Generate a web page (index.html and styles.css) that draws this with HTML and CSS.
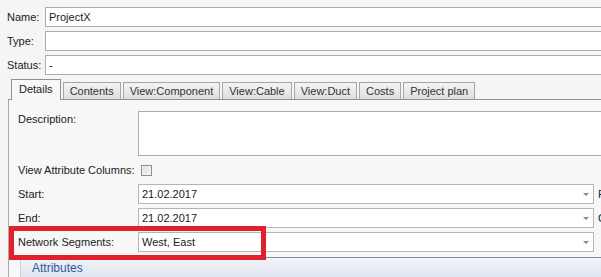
FILE: index.html
```html
<!DOCTYPE html>
<html lang="en">
  <head>
    <meta charset="UTF-8" />
    <title>ProjectX</title>
    <link rel="stylesheet" href="styles.css">
  </head>
  <body>
    <div class="head-fields">
      <div class="head-row">
        <span class="head-label">Name:</span>
        <div class="text-box">ProjectX</div>
      </div>
      <div class="head-row">
        <span class="head-label">Type:</span>
        <div class="text-box"></div>
      </div>
      <div class="head-row">
        <span class="head-label">Status:</span>
        <div class="text-box">-</div>
      </div>
    </div>

    <div class="tabs">
      <div class="tab selected">Details</div>
      <div class="tab">Contents</div>
      <div class="tab">View:Component</div>
      <div class="tab">View:Cable</div>
      <div class="tab">View:Duct</div>
      <div class="tab">Costs</div>
      <div class="tab">Project plan</div>
    </div>

    <div class="panel">
      <div class="form">
        <div class="form-row desc-row">
          <span class="form-label">Description:</span>
          <div class="text-area"></div>
        </div>
        <div class="form-row">
          <span class="form-label">View Attribute Columns:</span>
          <span class="check"></span>
        </div>
        <div class="form-row">
          <span class="form-label">Start:</span>
          <div class="combo"><span>21.02.2017</span><i class="arrow"></i></div>
          <span class="side-label">F</span>
        </div>
        <div class="form-row">
          <span class="form-label">End:</span>
          <div class="combo"><span>21.02.2017</span><i class="arrow"></i></div>
          <span class="side-label">C</span>
        </div>
        <div class="form-row">
          <span class="form-label">Network Segments:</span>
          <div class="combo"><span>West, East</span><i class="arrow"></i></div>
        </div>
      </div>

      <div class="section-head">Attributes</div>

      <div class="mark"></div>
    </div>
  </body>
</html>
```

FILE: styles.css
```css
body {
  font-family: "Liberation Sans", Arial, sans-serif;
  font-size: 11px;
  color: #1b1b1b;
  background-color: #f5f5f5;
  margin: 0;
  padding: 7px 0 0 0;
  width: 601px;
  height: 277px;
  box-sizing: border-box;
  overflow: hidden;
  position: relative;
}

/* top fields */
.head-fields {
  display: flex;
  flex-direction: column;
  gap: 4px;
  padding-left: 7px;
}
.head-row {
  display: flex;
  align-items: center;
  height: 20px;
}
.head-label {
  width: 38px;
  flex: none;
}
.text-box {
  flex: 1;
  height: 20px;
  box-sizing: border-box;
  background-color: #fff;
  border: 1px solid #a9abb0;
  border-right: none;
  padding: 3px 0 0 3px;
}

/* tabs */
.tabs {
  display: flex;
  align-items: flex-end;
  gap: 2px;
  margin-top: 4px;
  padding-left: 11px;
  height: 20px;
  position: relative;
  z-index: 1;
}
.tab {
  height: 17px;
  box-sizing: border-box;
  padding: 2px 6px 0 6px;
  border: 1px solid #a3a5ab;
  border-bottom: none;
  background: linear-gradient(#f4f4f4, #dedede);
  color: #333;
  white-space: nowrap;
}
.tab.selected {
  height: 21px;
  margin-bottom: -1px;
  padding: 3px 7px 0 7px;
  background: #f7f7f7;
  border-color: #8f9197;
  color: #1b1b1b;
}

/* details panel */
.panel {
  margin-left: 8px;
  border-left: 1px solid #a9abb0;
  border-top: 1px solid #8f9197;
  background-color: #f7f7f7;
  padding-top: 11px;
  height: 178px;
  box-sizing: border-box;
  overflow: hidden;
}
.form {
  display: flex;
  flex-direction: column;
  gap: 4px;
  padding-left: 9px;
}
.form-row {
  display: flex;
  align-items: center;
  height: 20px;
}
.desc-row {
  align-items: flex-start;
  height: 45px;
}
.desc-row .form-label {
  padding-top: 2px;
}
.form-label {
  width: 120px;
  flex: none;
  white-space: nowrap;
}
.text-area {
  flex: 1;
  height: 45px;
  box-sizing: border-box;
  background-color: #fff;
  border: 1px solid #a9abb0;
  border-right: none;
}
.check {
  width: 11px;
  height: 11px;
  box-sizing: border-box;
  margin-left: 3px;
  border: 1px solid #8e8f8f;
  background: linear-gradient(135deg, #dcdcdc, #f6f6f6);
  box-shadow: inset 0 0 0 1px #f0f0f0;
}
.combo {
  width: 456px;
  flex: none;
  height: 20px;
  box-sizing: border-box;
  background-color: #fff;
  border: 1px solid #b4b6bb;
  display: flex;
  align-items: center;
  justify-content: space-between;
  padding: 0 4px 0 3px;
}
.arrow {
  width: 0;
  height: 0;
  border-left: 3px solid transparent;
  border-right: 3px solid transparent;
  border-top: 3px solid #8a8a8a;
}
.side-label {
  margin-left: 4px;
  white-space: nowrap;
}

.section-head {
  margin: 5px 0 0 11px;
  height: 20px;
  box-sizing: border-box;
  border-top: 1px solid #878a90;
  border-left: 1px solid #c9d1dc;
  background: linear-gradient(#f1f4f9, #dfe5ee);
  color: #2d5a9a;
  font-size: 12px;
  padding: 3px 0 0 11px;
}

/* red annotation frame */
.mark {
  position: absolute;
  left: 9px;
  top: 226px;
  width: 257px;
  height: 34px;
  box-sizing: border-box;
  border: 5px solid #e2202b;
}
```
